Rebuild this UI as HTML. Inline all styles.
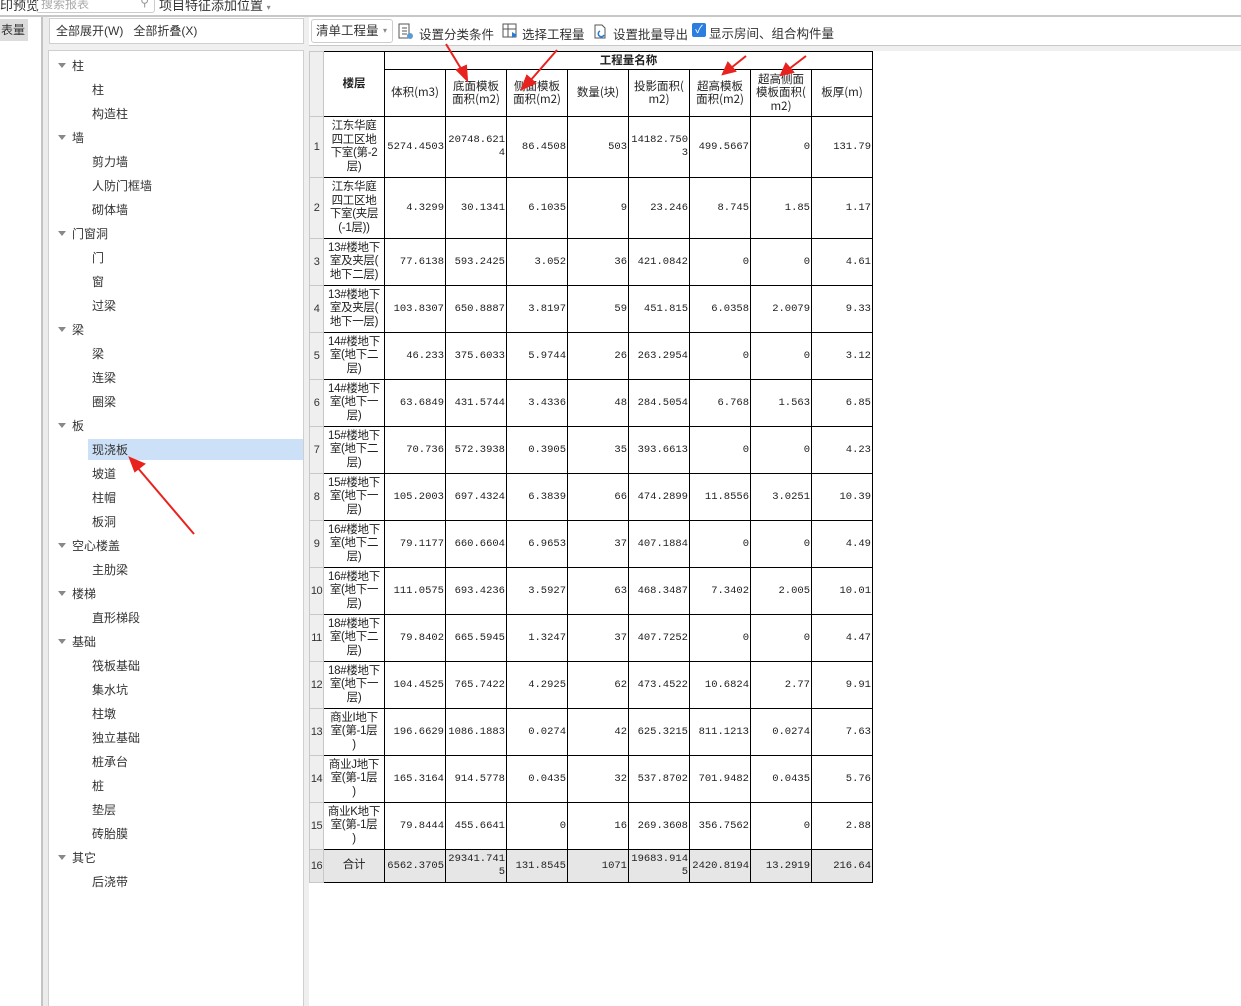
<!DOCTYPE html>
<html><head><meta charset="utf-8">
<style>
*{margin:0;padding:0;box-sizing:border-box}
body{width:1241px;height:1006px;position:relative;background:#fff;font-family:"Liberation Sans","Noto Sans CJK SC",sans-serif;font-size:12px;color:#222;overflow:hidden}
.a{position:absolute}
.tree div{position:absolute;font-size:12px;line-height:14px;color:#333}
.tri{position:absolute;width:0;height:0;border-left:4px solid transparent;border-right:4px solid transparent;border-top:5px solid #888}
table{position:absolute;left:309px;top:51px;width:563px;border-collapse:collapse;table-layout:fixed;font-family:"Liberation Mono","Noto Sans CJK SC",monospace;font-size:10.5px}
td{border:1px solid #000;padding:0 1px;line-height:13px;overflow:hidden;text-align:right;white-space:nowrap}
td.n{background:#efefef;border-color:#c8c8c8;text-align:center;color:#333;padding:0;font-family:"Liberation Sans",sans-serif;font-size:11px;letter-spacing:-0.5px}
td.f{text-align:center;font-family:"Liberation Sans","Noto Sans CJK SC",sans-serif;font-size:11.5px;padding:0;line-height:13.5px;letter-spacing:-0.3px}
th{border:1px solid #000;font-weight:normal;font-family:"Noto Sans CJK SC",sans-serif;font-size:11.5px;line-height:13.5px;text-align:center;padding:0;overflow:hidden;white-space:nowrap}
tr.s td{background:#e6e6e6}
</style></head><body>
<div class="a" style="left:0;top:0;width:1241px;height:17px;background:#fff;border-bottom:2px solid #c8c8c8"></div>
<div class="a" style="left:0;top:-5px;font-size:13px;color:#333">印预览</div>
<div class="a" style="left:36px;top:-6px;width:119px;height:19px;border:1px solid #ccc;border-radius:3px;font-size:12px;color:#aaa;padding-left:4px">搜索报表<span style="position:absolute;right:5px;top:0;color:#999">⚲</span></div>
<div class="a" style="left:159px;top:-5px;font-size:13px;color:#333">项目特征添加位置 <span style="font-size:8px;color:#888">▾</span></div>
<div class="a" style="left:41px;top:17px;width:8px;height:989px;background:#ececec;border-left:2px solid #c4c4c4"></div>
<div class="a" style="left:0;top:19px;width:28px;height:22px;background:#dcdcdc;font-size:12px;line-height:22px;padding-left:1px;color:#333">表量</div>
<div class="a" style="left:49px;top:18px;width:255px;height:26px;border:1px solid #cfcfcf;font-size:12px;line-height:24px;padding-left:6px;color:#333">全部展开(W)&nbsp;&nbsp;&nbsp;全部折叠(X)</div>
<div class="a" style="left:49px;top:44px;width:255px;height:7px;background:#f0f0f0"></div>
<div class="a" style="left:48px;top:50px;width:256px;height:956px;border:1px solid #cfcfcf;border-bottom:none"></div>
<div class="a" style="left:304px;top:17px;width:5px;height:989px;background:#efefef"></div>
<div class="a" style="left:88px;top:439px;width:215px;height:21px;background:#cce0f7"></div>
<div class="tree">
<i class="tri" style="left:58px;top:63px"></i><div style="left:72px;top:59px">柱</div>
<div style="left:92px;top:83px">柱</div><div style="left:92px;top:107px">构造柱</div>
<i class="tri" style="left:58px;top:135px"></i><div style="left:72px;top:131px">墙</div>
<div style="left:92px;top:155px">剪力墙</div><div style="left:92px;top:179px">人防门框墙</div><div style="left:92px;top:203px">砌体墙</div>
<i class="tri" style="left:58px;top:231px"></i><div style="left:72px;top:227px">门窗洞</div>
<div style="left:92px;top:251px">门</div><div style="left:92px;top:275px">窗</div><div style="left:92px;top:299px">过梁</div>
<i class="tri" style="left:58px;top:327px"></i><div style="left:72px;top:323px">梁</div>
<div style="left:92px;top:347px">梁</div><div style="left:92px;top:371px">连梁</div><div style="left:92px;top:395px">圈梁</div>
<i class="tri" style="left:58px;top:423px"></i><div style="left:72px;top:419px">板</div>
<div style="left:92px;top:443px">现浇板</div><div style="left:92px;top:467px">坡道</div><div style="left:92px;top:491px">柱帽</div><div style="left:92px;top:515px">板洞</div>
<i class="tri" style="left:58px;top:543px"></i><div style="left:72px;top:539px">空心楼盖</div>
<div style="left:92px;top:563px">主肋梁</div>
<i class="tri" style="left:58px;top:591px"></i><div style="left:72px;top:587px">楼梯</div>
<div style="left:92px;top:611px">直形梯段</div>
<i class="tri" style="left:58px;top:639px"></i><div style="left:72px;top:635px">基础</div>
<div style="left:92px;top:659px">筏板基础</div><div style="left:92px;top:683px">集水坑</div><div style="left:92px;top:707px">柱墩</div><div style="left:92px;top:731px">独立基础</div><div style="left:92px;top:755px">桩承台</div><div style="left:92px;top:779px">桩</div><div style="left:92px;top:803px">垫层</div><div style="left:92px;top:827px">砖胎膜</div>
<i class="tri" style="left:58px;top:855px"></i><div style="left:72px;top:851px">其它</div>
<div style="left:92px;top:875px">后浇带</div>
</div>
<div class="a" style="left:309px;top:45px;width:932px;height:6px;background:#efefef;border-top:1px solid #c8c8c8"></div>
<div class="a" style="left:311px;top:19px;width:82px;height:24px;border:1px solid #ccc;border-radius:3px;font-size:12.5px;line-height:22px;padding-left:4px;color:#333">清单工程量 <span style="font-size:8px;color:#888;position:absolute;right:5px;top:0">▾</span></div>
<svg class="a" style="left:398px;top:23px" width="16" height="17"><rect x="1" y="1" width="10" height="14" fill="none" stroke="#555"/><line x1="4" y1="5" x2="9" y2="5" stroke="#555"/><line x1="4" y1="8" x2="9" y2="8" stroke="#555"/><line x1="4" y1="11" x2="9" y2="11" stroke="#555"/><circle cx="12" cy="13" r="3" fill="#5b9bd5"/></svg>
<div class="a" style="left:419px;top:24px;font-size:12.5px;color:#333">设置分类条件</div>
<svg class="a" style="left:502px;top:23px" width="16" height="17"><rect x="1" y="1" width="13" height="13" fill="none" stroke="#555"/><line x1="1" y1="6" x2="14" y2="6" stroke="#555"/><line x1="6" y1="1" x2="6" y2="14" stroke="#555"/><path d="M10 9 L15 12 L10 15Z" fill="#2a7ad8"/></svg>
<div class="a" style="left:522px;top:24px;font-size:12.5px;color:#333">选择工程量</div>
<svg class="a" style="left:592px;top:23px" width="16" height="17"><path d="M3 2 H10 L13 5 V15 H3Z" fill="none" stroke="#555"/><path d="M8 8 a3 3 0 1 0 4 4" fill="none" stroke="#2a7ad8" stroke-width="1.5"/></svg>
<div class="a" style="left:613px;top:24px;font-size:12.5px;color:#333">设置批量导出</div>
<div class="a" style="left:692px;top:23px;width:14px;height:14px;background:#2b7de0;border-radius:2px;color:#fff;font-size:11px;line-height:14px;text-align:center">✓</div>
<div class="a" style="left:709px;top:23px;font-size:12.5px;color:#333">显示房间、组合构件量</div>
<table>
<colgroup><col style="width:14px"><col style="width:61px"><col style="width:61px"><col style="width:61px"><col style="width:61px"><col style="width:61px"><col style="width:61px"><col style="width:61px"><col style="width:61px"><col style="width:61px"></colgroup>
<tr style="height:18px"><td class="n" rowspan="2"></td><th rowspan="2" style="font-weight:bold">楼层</th><th colspan="8" style="font-weight:bold">工程量名称</th></tr>
<tr style="height:47px"><th>体积(m3)</th><th>底面模板<br>面积(m2)</th><th>侧面模板<br>面积(m2)</th><th>数量(块)</th><th>投影面积(<br>m2)</th><th>超高模板<br>面积(m2)</th><th>超高侧面<br>模板面积(<br>m2)</th><th>板厚(m)</th></tr>
<tr style="height:61px"><td class="n">1</td><td class="f">江东华庭<br>四工区地<br>下室(第-2<br>层)</td><td>5274.4503</td><td>20748.621<br>4</td><td>86.4508</td><td>503</td><td>14182.750<br>3</td><td>499.5667</td><td>0</td><td>131.79</td></tr>
<tr style="height:61px"><td class="n">2</td><td class="f">江东华庭<br>四工区地<br>下室(夹层<br>(-1层))</td><td>4.3299</td><td>30.1341</td><td>6.1035</td><td>9</td><td>23.246</td><td>8.745</td><td>1.85</td><td>1.17</td></tr>
<tr style="height:47px"><td class="n">3</td><td class="f">13#楼地下<br>室及夹层(<br>地下二层)</td><td>77.6138</td><td>593.2425</td><td>3.052</td><td>36</td><td>421.0842</td><td>0</td><td>0</td><td>4.61</td></tr>
<tr style="height:47px"><td class="n">4</td><td class="f">13#楼地下<br>室及夹层(<br>地下一层)</td><td>103.8307</td><td>650.8887</td><td>3.8197</td><td>59</td><td>451.815</td><td>6.0358</td><td>2.0079</td><td>9.33</td></tr>
<tr style="height:47px"><td class="n">5</td><td class="f">14#楼地下<br>室(地下二<br>层)</td><td>46.233</td><td>375.6033</td><td>5.9744</td><td>26</td><td>263.2954</td><td>0</td><td>0</td><td>3.12</td></tr>
<tr style="height:47px"><td class="n">6</td><td class="f">14#楼地下<br>室(地下一<br>层)</td><td>63.6849</td><td>431.5744</td><td>3.4336</td><td>48</td><td>284.5054</td><td>6.768</td><td>1.563</td><td>6.85</td></tr>
<tr style="height:47px"><td class="n">7</td><td class="f">15#楼地下<br>室(地下二<br>层)</td><td>70.736</td><td>572.3938</td><td>0.3905</td><td>35</td><td>393.6613</td><td>0</td><td>0</td><td>4.23</td></tr>
<tr style="height:47px"><td class="n">8</td><td class="f">15#楼地下<br>室(地下一<br>层)</td><td>105.2003</td><td>697.4324</td><td>6.3839</td><td>66</td><td>474.2899</td><td>11.8556</td><td>3.0251</td><td>10.39</td></tr>
<tr style="height:47px"><td class="n">9</td><td class="f">16#楼地下<br>室(地下二<br>层)</td><td>79.1177</td><td>660.6604</td><td>6.9653</td><td>37</td><td>407.1884</td><td>0</td><td>0</td><td>4.49</td></tr>
<tr style="height:47px"><td class="n">10</td><td class="f">16#楼地下<br>室(地下一<br>层)</td><td>111.0575</td><td>693.4236</td><td>3.5927</td><td>63</td><td>468.3487</td><td>7.3402</td><td>2.005</td><td>10.01</td></tr>
<tr style="height:47px"><td class="n">11</td><td class="f">18#楼地下<br>室(地下二<br>层)</td><td>79.8402</td><td>665.5945</td><td>1.3247</td><td>37</td><td>407.7252</td><td>0</td><td>0</td><td>4.47</td></tr>
<tr style="height:47px"><td class="n">12</td><td class="f">18#楼地下<br>室(地下一<br>层)</td><td>104.4525</td><td>765.7422</td><td>4.2925</td><td>62</td><td>473.4522</td><td>10.6824</td><td>2.77</td><td>9.91</td></tr>
<tr style="height:47px"><td class="n">13</td><td class="f">商业I地下<br>室(第-1层<br>)</td><td>196.6629</td><td>1086.1883</td><td>0.0274</td><td>42</td><td>625.3215</td><td>811.1213</td><td>0.0274</td><td>7.63</td></tr>
<tr style="height:47px"><td class="n">14</td><td class="f">商业J地下<br>室(第-1层<br>)</td><td>165.3164</td><td>914.5778</td><td>0.0435</td><td>32</td><td>537.8702</td><td>701.9482</td><td>0.0435</td><td>5.76</td></tr>
<tr style="height:47px"><td class="n">15</td><td class="f">商业K地下<br>室(第-1层<br>)</td><td>79.8444</td><td>455.6641</td><td>0</td><td>16</td><td>269.3608</td><td>356.7562</td><td>0</td><td>2.88</td></tr>
<tr class="s" style="height:33px"><td class="n">16</td><td class="f">合计</td><td>6562.3705</td><td>29341.741<br>5</td><td>131.8545</td><td>1071</td><td>19683.914<br>5</td><td>2420.8194</td><td>13.2919</td><td>216.64</td></tr>
</table>
<svg class="a" style="left:0;top:0" width="1241" height="1006">
<g stroke="#e8221e" stroke-width="2" fill="#e8221e">
<line x1="446" y1="44" x2="463" y2="72"/><path d="M467 80 L457 70 L466 66Z"/>
<line x1="557" y1="50" x2="530" y2="81"/><path d="M522 89 L527 76 L535 83Z"/>
<line x1="746" y1="56" x2="731" y2="68"/><path d="M723 74 L728 63 L735 71Z"/>
<line x1="806" y1="56" x2="789" y2="69"/><path d="M781 75 L786 64 L793 72Z"/>
<line x1="194" y1="534" x2="137" y2="467"/><path d="M130 458 L144 464 L135 471Z"/>
</g></svg>
</body></html>
